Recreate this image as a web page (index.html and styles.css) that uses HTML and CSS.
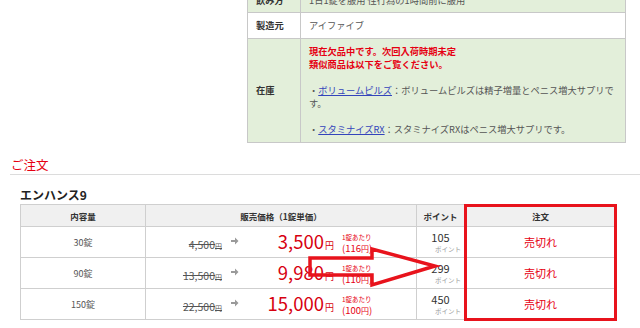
FILE: index.html
```html
<!DOCTYPE html>
<html lang="ja">
<head>
<meta charset="utf-8">
<title>エンハンス9</title>
<link rel="stylesheet" href="styles.css">
</head>
<body>
<div class="spec">
  <table class="spec-table">
    <tr class="row-use green">
      <th>飲み方</th>
      <td>1日1錠を服用 性行為の1時間前に服用</td>
    </tr>
    <tr class="row-maker">
      <th>製造元</th>
      <td>アイファイブ</td>
    </tr>
    <tr class="row-stock green">
      <th>在庫</th>
      <td class="stock">
        <p class="warn">現在欠品中です。次回入荷時期未定<br>類似商品は以下をご覧ください。</p>
        <p class="alt">・<a href="#">ボリュームピルズ</a>：ボリュームピルズは精子増量とペニス増大サプリです。</p>
        <p class="alt">・<a href="#">スタミナイズRX</a>：スタミナイズRXはペニス増大サプリです。</p>
      </td>
    </tr>
  </table>
</div>

<section class="order">
  <h2 class="order-title">ご注文</h2>
  <div class="product">
    <h3 class="product-name">エンハンス9</h3>
    <div class="table-wrap">
      <table class="price-table">
        <colgroup>
          <col class="c-qty"><col class="c-price"><col class="c-pt"><col class="c-buy">
        </colgroup>
        <tr class="head">
          <th>内容量</th>
          <th>販売価格（1錠単価）</th>
          <th>ポイント</th>
          <th>注文</th>
        </tr>
        <tr>
          <td class="qty">30錠</td>
          <td class="price">
            <div class="price-line">
              <span class="old">4,500<small>円</small></span>
              <svg class="arr" width="8" height="8" viewBox="0 0 8 8" aria-hidden="true"><path d="M0 3h4V0.5L7.5 4 4 7.5V5H0z" fill="#9a9a9a"/></svg>
              <span class="new">3,500<small>円</small></span>
              <span class="unit"><span class="unit-label">1錠あたり</span><span class="unit-val">(116<small>円</small>)</span></span>
            </div>
          </td>
          <td class="pt"><span class="pt-num">105</span><span class="pt-label">ポイント</span></td>
          <td class="buy">売切れ</td>
        </tr>
        <tr>
          <td class="qty">90錠</td>
          <td class="price">
            <div class="price-line">
              <span class="old">13,500<small>円</small></span>
              <svg class="arr" width="8" height="8" viewBox="0 0 8 8" aria-hidden="true"><path d="M0 3h4V0.5L7.5 4 4 7.5V5H0z" fill="#9a9a9a"/></svg>
              <span class="new">9,980<small>円</small></span>
              <span class="unit"><span class="unit-label">1錠あたり</span><span class="unit-val">(110<small>円</small>)</span></span>
            </div>
          </td>
          <td class="pt"><span class="pt-num">299</span><span class="pt-label">ポイント</span></td>
          <td class="buy">売切れ</td>
        </tr>
        <tr>
          <td class="qty">150錠</td>
          <td class="price">
            <div class="price-line">
              <span class="old">22,500<small>円</small></span>
              <svg class="arr" width="8" height="8" viewBox="0 0 8 8" aria-hidden="true"><path d="M0 3h4V0.5L7.5 4 4 7.5V5H0z" fill="#9a9a9a"/></svg>
              <span class="new">15,000<small>円</small></span>
              <span class="unit"><span class="unit-label">1錠あたり</span><span class="unit-val">(100<small>円</small>)</span></span>
            </div>
          </td>
          <td class="pt"><span class="pt-num">450</span><span class="pt-label">ポイント</span></td>
          <td class="buy">売切れ</td>
        </tr>
      </table>
      <svg class="callout-arrow" width="440" height="100" viewBox="0 0 440 100" aria-hidden="true">
        <polygon points="290,54 352,54 352,45 415,62 352,81 352,71 290,71" fill="none" stroke="#e8131c" stroke-width="3.5" stroke-linejoin="miter"/>
      </svg>
      <div class="highlight"></div>
    </div>
  </div>
</section>
</body>
</html>
```

FILE: styles.css
```css
html, body {
  margin: 0;
  padding: 0;
  background: #fff;
}

body {
  font-family: "Noto Sans CJK JP", "Noto Sans", sans-serif;
  color: #333;
  width: 640px;
  height: 328px;
  overflow: hidden;
}

/* ---------- spec table ---------- */
.spec {
  margin: -13px 0 0 247px;
  width: 379px;
}

.spec-table {
  width: 100%;
  border-collapse: collapse;
  table-layout: fixed;
  font-size: 9.25px;
  line-height: 13px;
}

.spec-table th,
.spec-table td {
  border: 1px solid #c8c8c8;
  padding: 0 8px;
  vertical-align: middle;
  text-align: left;
}

.spec-table th {
  width: 36px;
  font-weight: bold;
  color: #333;
}

.spec-table td {
  color: #555;
}

.spec-table .green th,
.spec-table .green td {
  background: #e3efda;
}

.row-use { height: 25px; }
.row-maker { height: 26px; }
.row-stock { height: 104px; }

.stock p {
  margin: 0;
}

.stock .warn {
  color: #e60012;
  font-weight: bold;
}

.stock .alt {
  margin-top: 13px;
}

.stock a {
  color: #3344bb;
  text-decoration: underline;
}

/* ---------- order section ---------- */
.order {
  padding-left: 10px;
}

.order-title {
  margin: 14px 0 0;
  padding: 0 0 2px 1px;
  font-size: 12.5px;
  line-height: 15px;
  font-weight: normal;
  color: #e60012;
  border-bottom: 1px solid #dcdcdc;
}

.product {
  margin-left: 10px;
}

.product-name {
  margin: 13px 0 2px;
  font-size: 12px;
  line-height: 14px;
  font-weight: bold;
  color: #222;
}

.table-wrap {
  position: relative;
  width: 596px;
}

.price-table {
  width: 596px;
  border-collapse: collapse;
  table-layout: fixed;
  font-size: 9px;
}

.c-qty { width: 125px; }
.c-price { width: 271px; }
.c-pt { width: 48px; }
.c-buy { width: 152px; }

.price-table th,
.price-table td {
  border: 1px solid #cfcfcf;
  padding: 0;
  text-align: center;
  vertical-align: middle;
}

.price-table .head {
  height: 22px;
}

.price-table .head th {
  background: #f0f0f0;
  font-weight: bold;
  color: #333;
  font-size: 8.5px;
}

.price-table tr:not(.head) {
  height: 31px;
}

.qty {
  color: #555;
  font-size: 9px;
}

.price-line {
  display: flex;
  align-items: baseline;
  padding-top: 2px;
}

.old {
  width: 76px;
  text-align: right;
  font-size: 10.5px;
  color: #555;
  text-decoration: line-through;
}

.old small {
  font-size: 7px;
}

.arr {
  flex: none;
  margin-left: 9px;
  margin-right: 1px;
  align-self: center;
  position: relative;
  top: -2px;
}

.new {
  width: 94px;
  text-align: right;
  font-size: 18.5px;
  line-height: 20px;
  color: #d7000f;
}

.new small {
  font-size: 9px;
  margin-left: 1px;
}

.unit {
  margin-left: 8px;
  display: flex;
  flex-direction: column;
  align-items: flex-start;
  align-self: center;
  color: #e60012;
  line-height: 12px;
}

.unit-label {
  font-size: 6.5px;
  line-height: 10px;
}

.unit-val {
  font-size: 9.5px;
}

.unit-val small {
  font-size: 8px;
}

.pt {
  line-height: 12px;
}

.pt-num {
  display: block;
  font-size: 11px;
  color: #333;
  padding-top: 1px;
}

.pt-label {
  display: block;
  text-align: right;
  padding-right: 3px;
  font-size: 6.5px;
  color: #999;
}

.buy {
  color: #e60012;
  font-size: 11px;
}

/* overlays */
.callout-arrow {
  position: absolute;
  left: 0;
  top: 0;
  pointer-events: none;
}

.highlight {
  position: absolute;
  left: 444px;
  top: 0;
  width: 153px;
  height: 117px;
  box-sizing: border-box;
  border: 3.5px solid #e8131c;
  pointer-events: none;
}
```
